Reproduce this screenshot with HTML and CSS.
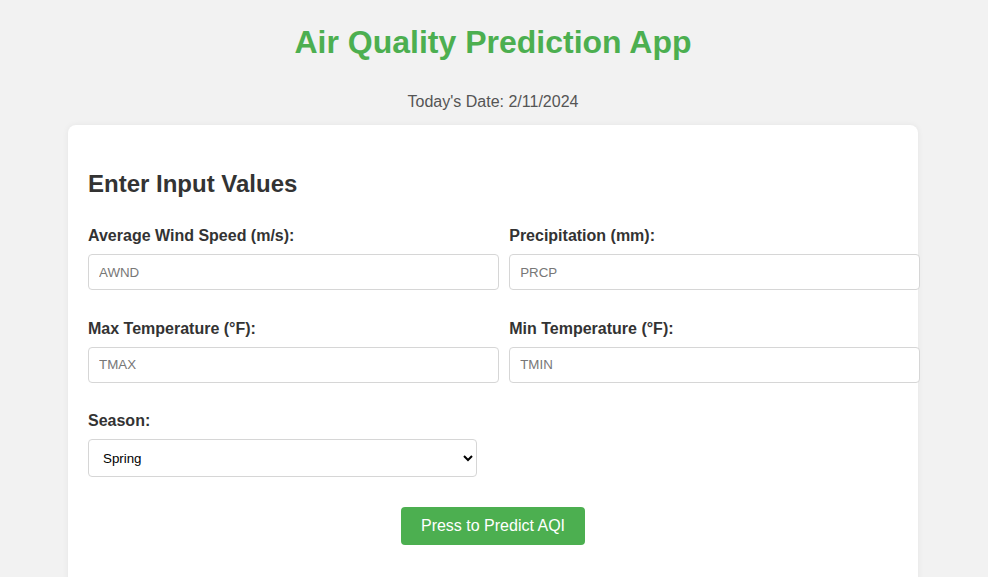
FILE: index.html
```html
<!DOCTYPE html>
<html lang="en">
<head>
<meta charset="utf-8">
<title>Air Quality Prediction App</title>
<link rel="stylesheet" href="styles.css">
</head>
<body>
  <h1 class="title">Air Quality Prediction App</h1>
  <p class="date">Today's Date: 2/11/2024</p>
  <div class="card">
    <h2 class="card-title">Enter Input Values</h2>
    <form class="form">
      <div class="row">
        <div class="field">
          <label class="label" for="awnd">Average Wind Speed (m/s):</label>
          <input class="input" id="awnd" type="text" placeholder="AWND">
        </div>
        <div class="field">
          <label class="label" for="prcp">Precipitation (mm):</label>
          <input class="input" id="prcp" type="text" placeholder="PRCP">
        </div>
      </div>
      <div class="row">
        <div class="field">
          <label class="label" for="tmax">Max Temperature (°F):</label>
          <input class="input" id="tmax" type="text" placeholder="TMAX">
        </div>
        <div class="field">
          <label class="label" for="tmin">Min Temperature (°F):</label>
          <input class="input" id="tmin" type="text" placeholder="TMIN">
        </div>
      </div>
      <div class="row">
        <div class="field">
          <label class="label" for="season">Season:</label>
          <select class="select" id="season">
            <option>Spring</option>
            <option>Summer</option>
            <option>Fall</option>
            <option>Winter</option>
          </select>
        </div>
      </div>
      <div class="actions">
        <button class="button" type="button">Press to Predict AQI</button>
      </div>
    </form>
  </div>
</body>
</html>
```
FILE: styles.css
```css
html, body {
  background: #f2f2f2;
}
body {
  margin: 0 10px 0 8px;
  font-family: "Liberation Sans", Arial, sans-serif;
  color: #333;
}
.title {
  margin: 0;
  padding-top: 24px;
  font-size: 32px;
  font-weight: bold;
  line-height: 37px;
  color: #4caf50;
  text-align: center;
}
.date {
  margin: 32px 0 14px;
  font-size: 16px;
  line-height: 18px;
  color: #555;
  text-align: center;
}
.card {
  width: 810px;
  margin: 0 auto;
  padding: 20px;
  background: #fff;
  border-radius: 8px;
  box-shadow: 0 0 6px rgba(0, 0, 0, 0.06);
  height: 600px;
}
.card-title {
  margin: 25px 0 29px;
  font-size: 24px;
  line-height: 28px;
  font-weight: bold;
  color: #333;
}
.row {
  display: flex;
  justify-content: space-between;
  margin-bottom: 29.5px;
}
.field {
  width: 48%;
}
.label {
  display: block;
  margin-bottom: 9px;
  font-size: 16px;
  line-height: 18px;
  font-weight: bold;
  color: #333;
}
.input {
  display: block;
  box-sizing: content-box;
  width: 100%;
  height: 14px;
  margin: 0;
  padding: 10px;
  border: 1px solid #d6d6d6;
  border-radius: 4px;
  font-family: "Liberation Sans", Arial, sans-serif;
  font-size: 13.33px;
  color: #333;
  background: #fff;
  outline: none;
}
.input::placeholder {
  color: #777;
}
.select {
  display: block;
  box-sizing: border-box;
  width: 100%;
  height: 38px;
  margin: 0;
  padding: 0 10px;
  border: 1px solid #d6d6d6;
  border-radius: 4px;
  font-family: "Liberation Sans", Arial, sans-serif;
  font-size: 13.33px;
  color: #000;
  background: #fff;
}
.actions {
  margin-top: 4.5px;
  text-align: center;
}
.button {
  padding: 10px 20px;
  border: none;
  border-radius: 4px;
  background: #4caf50;
  color: #fff;
  font-family: "Liberation Sans", Arial, sans-serif;
  font-size: 16px;
  line-height: 18px;
}
```
